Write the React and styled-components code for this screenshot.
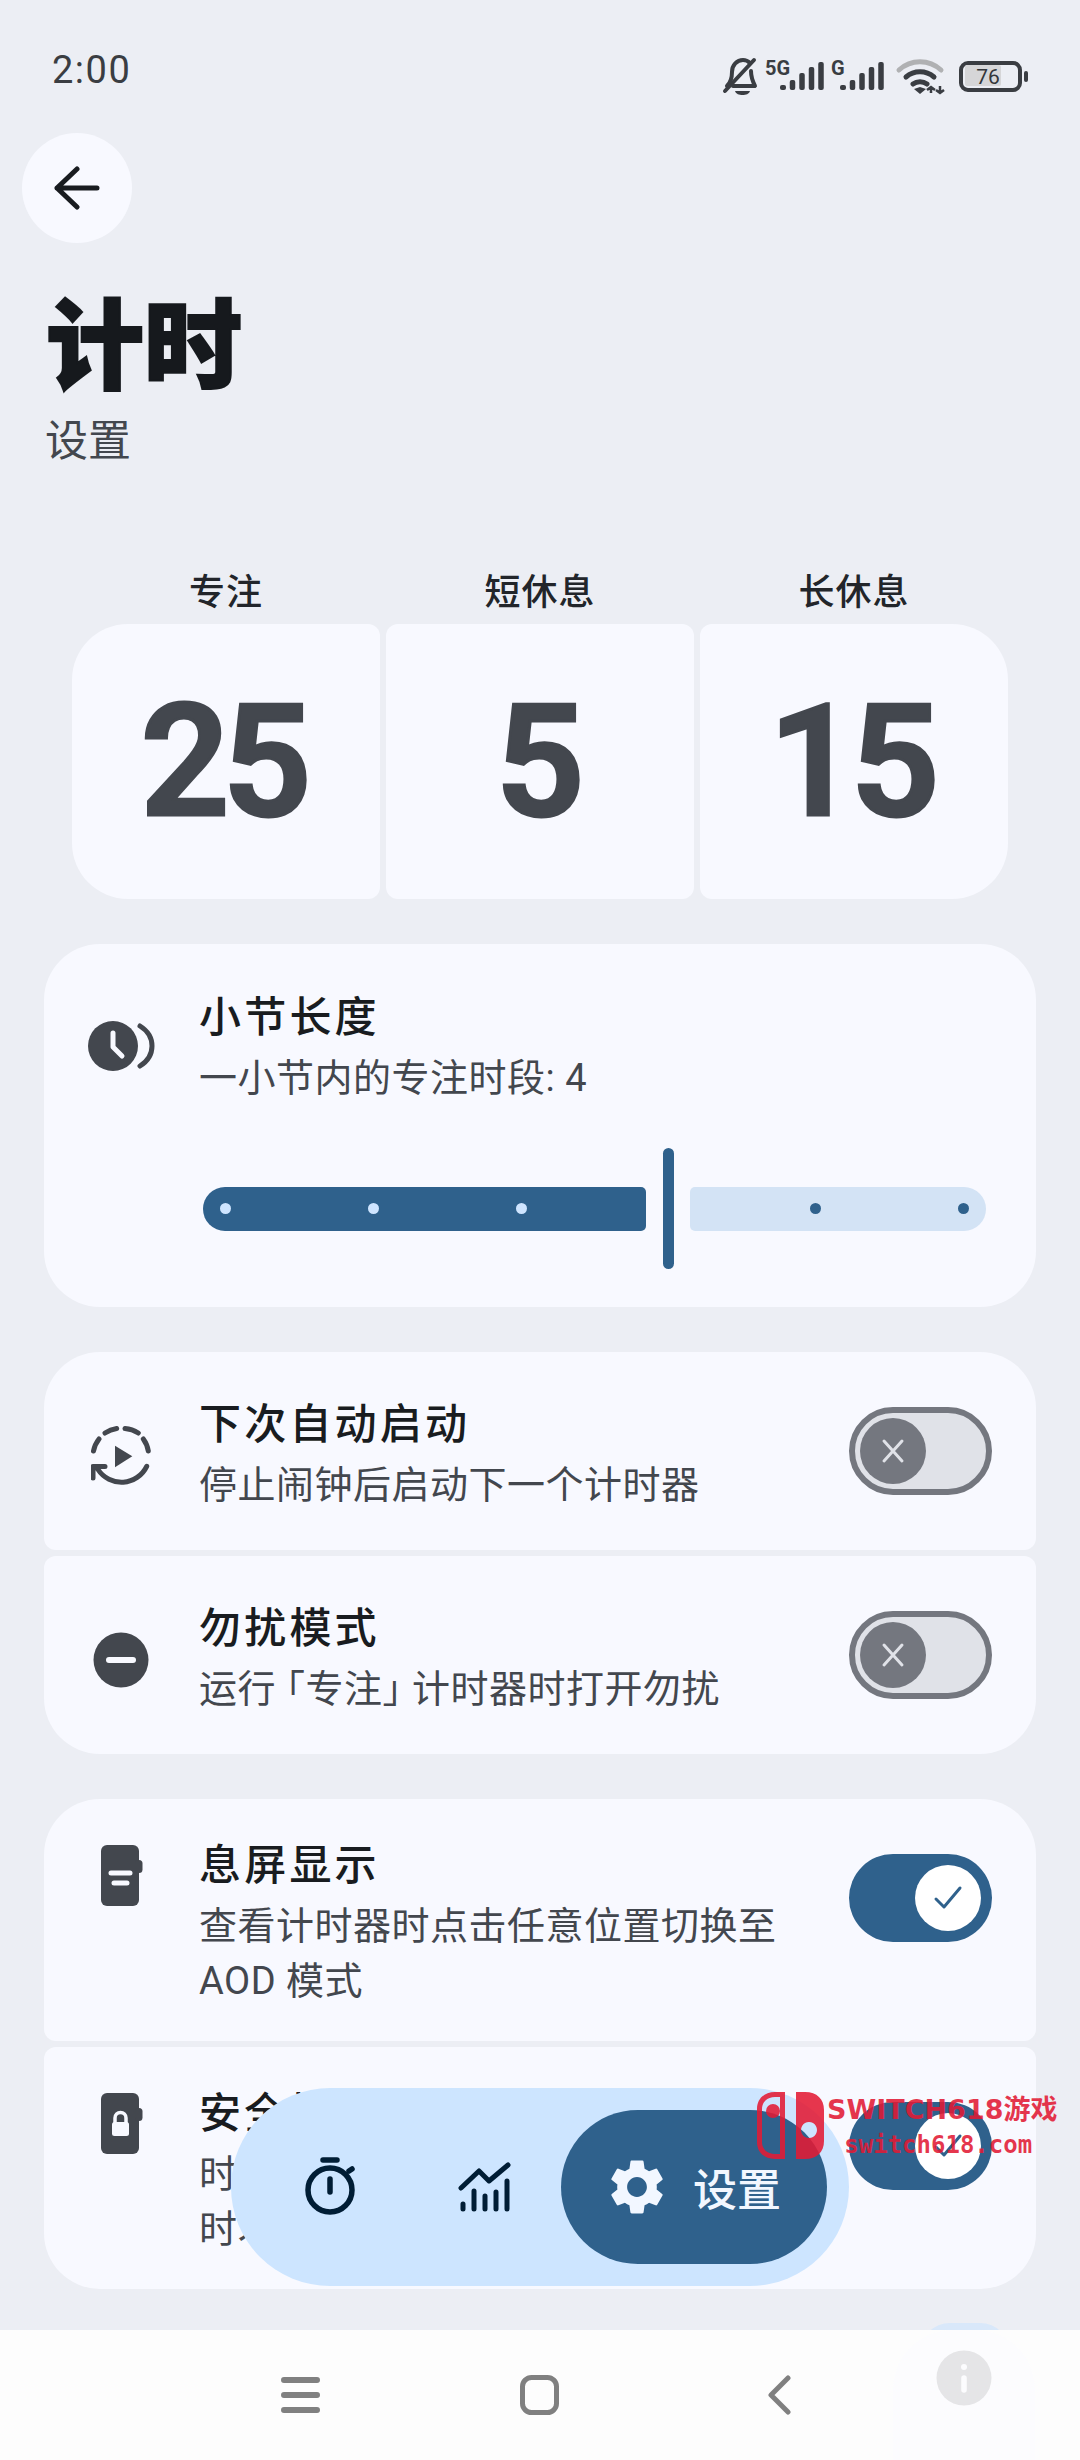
import React from 'react';
import styled, { createGlobalStyle } from 'styled-components';
import { MdSettings } from 'react-icons/md';

const GlobalStyle = createGlobalStyle`
  html, body {
    margin: 0;
    padding: 0;
    background: #eceef4;
  }
  * {
    box-sizing: border-box;
  }
`;

const SANS = `Roboto, "Noto Sans CJK SC", sans-serif`;
const PRIMARY = '#2f618c';
const CARD = '#f8f9ff';
const INK = '#191c20';
const MUTED = '#43474e';

const Screen = styled.div`
  position: relative;
  width: 1080px;
  height: 2460px;
  overflow: hidden;
  background: #eceef4;
  font-family: ${SANS};
  color: ${INK};
`;

const StatusBar = styled.div`
  height: 133px;
  display: flex;
  justify-content: space-between;
  align-items: flex-start;
  padding: 48px 50px 0 52px;
`;

const Clock = styled.div`
  font-size: 38px;
  line-height: 44px;
  letter-spacing: 1.5px;
  color: #3a3d42;
`;

const StatusIcons = styled.svg`
  display: block;
  margin-top: 2px;
`;

const BackButton = styled.div`
  width: 110px;
  height: 110px;
  margin-left: 22px;
  border-radius: 50%;
  background: ${CARD};
  display: flex;
  align-items: center;
  justify-content: center;
`;

const Title = styled.h1`
  margin: 45px 0 0 46px;
  font-size: 98px;
  line-height: 120px;
  font-weight: 900;
  color: #16191d;
  -webkit-text-stroke: 2px #16191d;
`;

const Subtitle = styled.div`
  margin: 5px 0 0 45px;
  font-size: 43px;
  line-height: 56px;
  color: ${MUTED};
`;

const Labels = styled.div`
  margin: 97px 72px 4px;
  display: grid;
  grid-template-columns: repeat(3, 1fr);
  gap: 6px;
`;

const Label = styled.div`
  font-size: 36px;
  line-height: 54px;
  letter-spacing: 1px;
  text-align: center;
  font-weight: 500;
  color: #22252a;
`;

const Pickers = styled.div`
  margin: 0 72px;
  display: grid;
  grid-template-columns: repeat(3, 1fr);
  gap: 6px;
`;

const Picker = styled.div`
  height: 275px;
  background: ${CARD};
  border-radius: ${(p) => p.$radius};
  display: flex;
  align-items: center;
  justify-content: center;
  padding-right: 7px;
  font-family: Roboto, sans-serif;
  font-size: 156px;
  font-weight: 600;
  letter-spacing: -7px;
  color: #43474e;
  -webkit-text-stroke: 3px #43474e;
`;

const Group = styled.div`
  margin: ${(p) => p.$top}px 44px 0;
  display: flex;
  flex-direction: column;
  gap: 6px;
`;

const Card = styled.div`
  background: ${CARD};
  border-radius: ${(p) => p.$radius || '56px'};
`;

const Row = styled.div`
  display: flex;
  align-items: ${(p) => (p.$top ? 'flex-start' : 'center')};
  min-height: ${(p) => p.$height || 198}px;
  padding: ${(p) => p.$pad ?? 32}px 44px ${(p) => p.$pad ?? 32}px 32px;
`;

const IconSlot = styled.div`
  width: 90px;
  flex: none;
  margin-right: 33px;
  margin-top: ${(p) => p.$shift || 0}px;
  display: flex;
  justify-content: center;
`;

const RowText = styled.div`
  flex: 1;
  min-width: 0;
`;

const RowTitle = styled.div`
  font-size: 42px;
  line-height: 68px;
  letter-spacing: 3.2px;
  font-weight: 500;
  color: ${INK};
  padding-top: 1px;
  margin-bottom: -1px;
`;

const RowSub = styled.div`
  font-size: 38px;
  line-height: 55px;
  letter-spacing: 0.5px;
  color: ${MUTED};
`;

const Bracket = styled.span`
  font-feature-settings: "halt";
  margin: ${(p) => (p.$close ? '0 10px 0 0' : '0 0 0 10px')};
`;

const Track = styled.div`
  flex: none;
  width: 143px;
  height: 88px;
  margin-top: ${(p) => p.$shift || 0}px;
  border-radius: 44px;
  display: flex;
  align-items: center;
  background: ${(p) => (p.$on ? PRIMARY : '#e0e2e8')};
  border: ${(p) => (p.$on ? 'none' : '6px solid #74777f')};
  padding: ${(p) => (p.$on ? '0 11px 0 0' : '0 0 0 5px')};
  justify-content: ${(p) => (p.$on ? 'flex-end' : 'flex-start')};
`;

const Thumb = styled.div`
  width: 66px;
  height: 66px;
  border-radius: 50%;
  background: ${(p) => (p.$on ? '#ffffff' : '#74777f')};
  display: flex;
  align-items: center;
  justify-content: center;
`;

const Slider = styled.div`
  margin: 3px 6px 38px 159px;
  height: 121px;
  display: flex;
  align-items: center;
`;

const SliderPart = styled.div`
  height: 44px;
  display: flex;
  align-items: center;
  justify-content: space-between;
  background: ${(p) => (p.$active ? PRIMARY : '#d3e3f5')};
  border-radius: ${(p) => (p.$active ? '22px 5px 5px 22px' : '5px 22px 22px 5px')};
  width: ${(p) => p.$width}px;
  padding: ${(p) => (p.$active ? '0 0 0 17px' : '0 17px 0 0')};
`;

const SliderDots = styled.div`
  display: grid;
  grid-template-columns: repeat(${(p) => p.$count}, 11px);
  column-gap: 137px;
  margin-left: ${(p) => (p.$end ? 'auto' : 0)};
`;

const Dot = styled.span`
  width: 11px;
  height: 11px;
  border-radius: 50%;
  background: ${(p) => (p.$active ? '#cfe5ff' : PRIMARY)};
`;

const Handle = styled.div`
  width: 11px;
  height: 121px;
  margin: 0 16px 0 17px;
  border-radius: 6px;
  background: ${PRIMARY};
`;

const FloatingNav = styled.div`
  position: absolute;
  left: 231px;
  top: 2088px;
  width: 618px;
  height: 198px;
  border-radius: 99px;
  background: #cde5ff;
  display: flex;
  align-items: center;
  padding: 0 22px 0 48px;
`;

const NavItem = styled.div`
  width: ${(p) => p.$width}px;
  margin-left: ${(p) => p.$gap || 0}px;
  flex: none;
  display: flex;
  justify-content: center;
  align-items: center;
`;

const NavActive = styled.div`
  margin-left: auto;
  width: 266px;
  height: 154px;
  border-radius: 77px;
  background: ${PRIMARY};
  display: flex;
  align-items: center;
  gap: 29px;
  padding-left: 49px;
  font-size: 44px;
  font-weight: 500;
  color: #f2f7ff;
`;

const SystemBar = styled.div`
  position: absolute;
  left: 0;
  right: 0;
  bottom: 0;
  height: 130px;
  background: #fdfdfd;
  display: flex;
  align-items: flex-start;
  padding: 45px 0 0 281px;
`;

const SystemIcon = styled.svg`
  display: block;
  flex: none;
  margin-right: ${(p) => p.$gap}px;
`;

const PeekTab = styled.div`
  position: absolute;
  left: 920px;
  top: 2323px;
  width: 90px;
  height: 30px;
  border-radius: 40px 40px 0 0;
  background: #d9e8fa;
`;

const InfoBlob = styled.div`
  position: absolute;
  left: 893px;
  top: 2330px;
  width: 142px;
  height: 130px;
  padding-top: 20px;
  border-radius: 60px 60px 0 0;
  background: #fcfcfe;
  display: flex;
  align-items: flex-start;
  justify-content: center;
`;

const Watermark = styled.div`
  position: absolute;
  left: 757px;
  top: 2092px;
  display: flex;
  align-items: flex-start;
`;

const MarkText = styled.div`
  margin: 2px 0 0 2px;
  display: flex;
  flex-direction: column;
  align-items: center;
  color: rgba(226, 26, 52, 0.88);
  font-family: "DejaVu Sans", "Noto Sans CJK SC", sans-serif;
  font-weight: 700;
`;

const MarkTop = styled.div`
  font-size: 27px;
  line-height: 32px;
  white-space: nowrap;
`;

const MarkBottom = styled.div`
  font-family: "DejaVu Sans Mono", monospace;
  font-size: 24px;
  line-height: 28px;
  margin: 5px 8px 0 0;
  white-space: nowrap;
`;

const STATUS_BARS = [
  [6, 5],
  [5.5, 10],
  [5.5, 17],
  [5.5, 23],
  [5.5, 28],
];

const SignalBars = ({ x }) =>
  STATUS_BARS.map(([w, h], i) => (
    <rect key={i} x={x + i * 9.5 - w / 2} y={40 - h} width={w} height={h} rx="2" fill="#3a3d42" />
  ));

// status icons, origin is at (720, 42) on the screen
const StatusGlyphs = () => (
  <StatusIcons width="312" height="50" viewBox="0 0 312 50">
    <g fill="none" stroke="#3a3d42" strokeWidth="4" strokeLinecap="round" strokeLinejoin="round">
      <path d="M9 36c3-3 5-6 5-14 0-7 5-12 11-12 3 0 5 1 7 3M33 21c0 7 2 11 4 15H15" />
      <path d="M7 41L36 10" />
    </g>
    <path d="M17 41h15c-1 3-4 4-7.500 4s-6.500-1-7.500-4z" fill="#3a3d42" />
    <text x="47" y="25" fontFamily="Roboto, sans-serif" fontWeight="700" fontSize="20" fill="#3a3d42">5G</text>
    <SignalBars x={65} />
    <text x="113" y="25" fontFamily="Roboto, sans-serif" fontWeight="700" fontSize="20" fill="#3a3d42">G</text>
    <SignalBars x={125} />
    <g fill="none" strokeLinecap="round">
      <path d="M181 20c12-11 30-11 42 0" stroke="#b0b1b3" strokeWidth="5" />
      <path d="M188 27c8-7 20-7 28 0M195 34c4-3 10-3 14 0" stroke="#3a3d42" strokeWidth="5" />
    </g>
    <path d="M196 39l6-2 6 2-6 5z" fill="#3a3d42" />
    <path d="M213 38v5M222 36v7M209 40l4-3 4 3M218 40l4 3 4-3" stroke="#3a3d42" strokeWidth="2.500" fill="none" />
    <rect x="243" y="13" width="59" height="27" rx="7" fill="none" stroke="#3a3d42" strokeWidth="4" />
    <rect x="247" y="15" width="36" height="21" rx="2" fill="#d6d6d8" />
    <rect x="306" y="21" width="4" height="11" rx="2" fill="#3a3d42" />
    <text x="270" y="34" textAnchor="middle" fontFamily="Roboto, sans-serif" fontSize="21" fill="#33363a">76</text>
  </StatusIcons>
);

const BackArrow = () => (
  <svg width="46" height="44" viewBox="0 0 46 44" fill="none" stroke="#191c20" strokeWidth="5" strokeLinecap="round" strokeLinejoin="round">
    <path d="M3 22H43M23 3L3 22l20 19" />
  </svg>
);

const TimerDialIcon = () => (
  <svg width="70" height="70" viewBox="-2 0 70 70">
    <circle cx="25" cy="35" r="25" fill="#43474e" />
    <path d="M25 22V36L34 45" fill="none" stroke="#f8f9ff" strokeWidth="5" strokeLinecap="round" strokeLinejoin="round" />
    <path d="M52 15C68 25 68 45 52 55" fill="none" stroke="#43474e" strokeWidth="5" strokeLinecap="round" />
  </svg>
);

const AutoStartIcon = () => (
  <svg width="60" height="60" viewBox="0 0 60 60" fill="none" stroke="#43474e" strokeWidth="5" strokeLinecap="round" strokeLinejoin="round">
    <path d="M14 7A28 28 0 0 1 25.700 2.500M34 2.500A28 28 0 0 1 47.300 7M52.300 13A28 28 0 0 1 57.300 25M8 13A28 28 0 0 0 2.500 25" />
    <path d="M55.700 40.300A28 28 0 0 1 7 43.500M2 52V40.500H14" />
    <path d="M24 19.700L41.300 30.300 24 41.300z" fill="#43474e" stroke="none" />
  </svg>
);

const DndIcon = () => (
  <svg width="56" height="56" viewBox="0 0 56 56">
    <circle cx="28" cy="28" r="27.500" fill="#43474e" />
    <path d="M16 28H40" stroke="#f8f9ff" strokeWidth="6" strokeLinecap="round" />
  </svg>
);

const PhoneIcon = ({ lock }) => (
  <svg width="44" height="62" viewBox="-2 0 44 62">
    <rect x="0" y="0" width="38" height="61" rx="6" fill="#43474e" />
    <rect x="34" y="15" width="7.500" height="13" rx="3.500" fill="#43474e" />
    {lock ? (
      <g fill="#f8f9ff">
        <rect x="11" y="29" width="17" height="14" rx="2.500" />
        <path d="M14 30v-5a5.500 5.500 0 0 1 11 0v5" fill="none" stroke="#f8f9ff" strokeWidth="3.500" />
      </g>
    ) : (
      <path d="M10 28H29M13 38H26" stroke="#f8f9ff" strokeWidth="5" strokeLinecap="round" />
    )}
  </svg>
);

const Toggle = ({ on, shift }) => (
  <Track $on={on} $shift={shift}>
    <Thumb $on={on}>
      {on ? (
        <svg width="30" height="30" viewBox="0 0 30 30" fill="none" stroke={PRIMARY} strokeWidth="3" strokeLinecap="round" strokeLinejoin="round">
          <path d="M3 16l8 8L27 5" />
        </svg>
      ) : (
        <svg width="26" height="26" viewBox="0 0 26 26" fill="none" stroke="#e0e2e8" strokeWidth="3" strokeLinecap="round">
          <path d="M4 3L22 23M22 3L4 23" />
        </svg>
      )}
    </Thumb>
  </Track>
);

const StopwatchIcon = () => (
  <svg width="56" height="62" viewBox="0 0 56 62" fill="none" stroke="#001d35" strokeWidth="5.500" strokeLinecap="round">
    <circle cx="26" cy="34" r="22" />
    <path d="M19 4H33M26 23V36M45 15l3-2" />
  </svg>
);

const StatsIcon = () => (
  <svg width="54" height="50" viewBox="0 0 54 50" fill="none" stroke="#001d35" strokeLinecap="round" strokeLinejoin="round">
    <path d="M3 26L21 9l10 10L50 3" strokeWidth="5" />
    <path d="M5 42V47M16 29V47M27 34V47M38 30V47M49 19V47" strokeWidth="5" />
  </svg>
);

const JoyconLogo = () => (
  <svg width="68" height="68" viewBox="0 0 68 68" style={{ flex: 'none' }}>
    <g fill="rgba(226, 26, 52, 0.88)">
      <path fillRule="evenodd" d="M18 0H28V67H18C7 67 0 60 0 50V17C0 7 7 0 18 0zM23 5H18C10 5 5 10 5 17V50C5 57 10 62 18 62H23z" />
      <circle cx="16" cy="19" r="7" />
      <path fillRule="evenodd" d="M39 0H48C60 0 67 7 67 18V49C67 60 60 67 48 67H39zM52 30a8 8 0 1 0 .010 0z" />
    </g>
  </svg>
);

const App = () => (
  <Screen>
    <GlobalStyle />
    <StatusBar>
      <Clock>2:00</Clock>
      <StatusGlyphs />
    </StatusBar>
    <BackButton>
      <BackArrow />
    </BackButton>
    <Title>计时</Title>
    <Subtitle>设置</Subtitle>

    <Labels>
      <Label>专注</Label>
      <Label>短休息</Label>
      <Label>长休息</Label>
    </Labels>
    <Pickers>
      <Picker $radius="56px 12px 12px 56px">25</Picker>
      <Picker $radius="12px">5</Picker>
      <Picker $radius="12px 56px 56px 12px">15</Picker>
    </Pickers>

    <Group $top={45}>
      <Card>
        <Row $height={40} $pad={39}>
          <IconSlot $shift={2}>
            <TimerDialIcon />
          </IconSlot>
          <RowText>
            <RowTitle>小节长度</RowTitle>
            <RowSub>一小节内的专注时段: 4</RowSub>
          </RowText>
        </Row>
        <Slider>
          <SliderPart $active $width={443}>
            <SliderDots $count={3}>
              <Dot $active />
              <Dot $active />
              <Dot $active />
            </SliderDots>
          </SliderPart>
          <Handle />
          <SliderPart $width={296}>
            <SliderDots $count={2} $end>
              <Dot />
              <Dot />
            </SliderDots>
          </SliderPart>
        </Slider>
      </Card>
    </Group>

    <Group $top={45}>
      <Card $radius="56px 56px 12px 12px">
        <Row>
          <IconSlot $shift={10}>
            <AutoStartIcon />
          </IconSlot>
          <RowText>
            <RowTitle>下次自动启动</RowTitle>
            <RowSub>停止闹钟后启动下一个计时器</RowSub>
          </RowText>
          <Toggle />
        </Row>
      </Card>
      <Card $radius="12px 12px 56px 56px">
        <Row>
          <IconSlot $shift={10}>
            <DndIcon />
          </IconSlot>
          <RowText>
            <RowTitle>勿扰模式</RowTitle>
            <RowSub>运行<Bracket>「</Bracket>专注<Bracket $close>」</Bracket>计时器时打开勿扰</RowSub>
          </RowText>
          <Toggle />
        </Row>
      </Card>
    </Group>

    <Group $top={45}>
      <Card $radius="56px 56px 12px 12px">
        <Row $top>
          <IconSlot $shift={14}>
            <PhoneIcon />
          </IconSlot>
          <RowText>
            <RowTitle>息屏显示</RowTitle>
            <RowSub>查看计时器时点击任意位置切换至<br />AOD 模式</RowSub>
          </RowText>
          <Toggle on shift={23} />
        </Row>
      </Card>
      <Card $radius="12px 12px 56px 56px">
        <Row $top>
          <IconSlot $shift={14}>
            <PhoneIcon lock />
          </IconSlot>
          <RowText>
            <RowTitle>安全模式</RowTitle>
            <RowSub>时钟显示时隐藏所有通知内容<br />时才显示</RowSub>
          </RowText>
          <Toggle on shift={23} />
        </Row>
      </Card>
    </Group>

    <FloatingNav>
      <NavItem $width={106}>
        <StopwatchIcon />
      </NavItem>
      <NavItem $width={124} $gap={38}>
        <StatsIcon />
      </NavItem>
      <NavActive>
        <MdSettings size={66} color="#f2f7ff" style={{ flex: 'none', margin: '0 -6px' }} />
        设置
      </NavActive>
    </FloatingNav>

    <PeekTab />
    <SystemBar>
      <SystemIcon $gap={200} width="39" height="40" viewBox="0 0 39 40" fill="none" stroke="#808080" strokeWidth="6" strokeLinecap="round">
        <path d="M3 5H36M3 20H36M3 35H36" />
      </SystemIcon>
      <SystemIcon $gap={208} width="39" height="40" viewBox="0 0 39 40" fill="none" stroke="#808080" strokeWidth="5">
        <rect x="2.500" y="2.500" width="34" height="35" rx="9" />
      </SystemIcon>
      <SystemIcon $gap={0} width="24" height="40" viewBox="0 0 24 40" fill="none" stroke="#808080" strokeWidth="5" strokeLinecap="round" strokeLinejoin="round">
        <path d="M21 3L4 20l17 17" />
      </SystemIcon>
    </SystemBar>
    <InfoBlob>
      <svg width="56" height="56" viewBox="0 0 56 56">
        <circle cx="28" cy="28" r="27.500" fill="#e5e5e7" />
        <circle cx="28" cy="17" r="3" fill="#fcfcfe" />
        <path d="M28 28V40" stroke="#fcfcfe" strokeWidth="5.500" strokeLinecap="round" />
      </svg>
    </InfoBlob>

    <Watermark>
      <JoyconLogo />
      <MarkText>
        <MarkTop>SWITCH618游戏</MarkTop>
        <MarkBottom>switch618.com</MarkBottom>
      </MarkText>
    </Watermark>
  </Screen>
);

export default App;
